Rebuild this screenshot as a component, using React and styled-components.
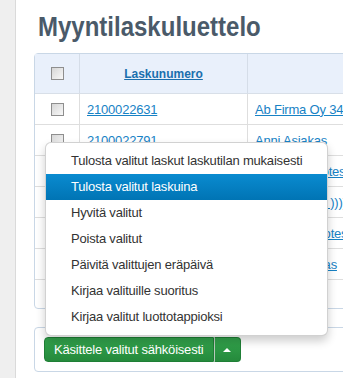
import styled, { createGlobalStyle } from "styled-components";

const GlobalStyle = createGlobalStyle`
html, body {
  margin: 0;
  padding: 0;
  overflow: hidden;
  background: #fff;
}
body {
  font-family: "Liberation Sans", Arial, sans-serif;
  font-size: 13px;
  color: #333;
}
`;

const rows = [
  { no: "2100022631", name: "Ab Firma Oy 34, Testikatu 1" },
  { no: "2100022791", name: "Anni Asiakas" },
  { no: "2100022792", name: "Nurmen Autotestaus Oy" },
  { no: "2100022793", name: "Erikoismerkit ))))((((" },
  { no: "2100022794", name: "Mäkisen Autotestaus" },
  { no: "2100022795", name: "Pekka Asiakas" },
  { no: "2100022796", name: "Anni" },
];

const menuItems = [
  "Tulosta valitut laskut laskutilan mukaisesti",
  "Tulosta valitut laskuina",
  "Hyvitä valitut",
  "Poista valitut",
  "Päivitä valittujen eräpäivä",
  "Kirjaa valituille suoritus",
  "Kirjaa valitut luottotappioksi",
];

const Page = styled.div`
display: flex;
width: 343px;
min-height: 378px;
`;

const Sidebar = styled.div`
flex: 0 0 15px;
background: #efefef;
border-right: 1px solid #dadada;
`;

const Main = styled.div`
flex: 1;
padding: 13px 0 0 18px;
overflow: hidden;
`;

const Title = styled.h1`
margin: 0 0 11px 4px;
height: 29px;
font-size: 24px;
line-height: 29px;
font-weight: bold;
color: #4a5a69;
white-space: nowrap;
transform: scaleY(1.12);
transform-origin: 0 80%;
`;

const Table = styled.table`
width: 520px;
border-collapse: separate;
border-spacing: 0;
border: 1px solid #c9d7e6;
border-radius: 4px;
letter-spacing: -0.2px;
`;

const HeadCell = styled.th`
height: 39px;
padding: 0;
background: #e9f0fb;
border-bottom: 1px solid #d8dfe8;
border-left: ${(p) => (p.$first ? "none" : "1px solid #d5dde8")};
width: ${(p) => p.$w || "auto"};
text-align: center;
font-size: 12px;
letter-spacing: 0;
`;

const Row = styled.tr`
&:last-child td {
  height: 28px;
  border-bottom: none;
}
`;

const Cell = styled.td`
height: 30px;
padding: 0 ${(p) => (p.$center ? "0" : "7px")};
border-bottom: 1px solid #dedede;
border-left: ${(p) => (p.$first ? "none" : "1px solid #dedede")};
text-align: ${(p) => (p.$center ? "center" : "left")};
white-space: nowrap;
`;

const Check = styled.input.attrs({ type: "checkbox" })`
appearance: none;
display: block;
margin: 0 auto;
width: 13px;
height: 13px;
border: 1px solid #8e8e8e;
background: linear-gradient(135deg, #d6d6d6, #f8f8f8);
box-sizing: border-box;
`;

const Link = styled.a`
color: ${(p) => (p.$head ? "#1a6fae" : "#1782c5")};
font-weight: ${(p) => (p.$head ? "bold" : "normal")};
text-decoration: underline;
`;

const Panel = styled.div`
margin-top: 18px;
width: 520px;
padding: 9px;
border: 1px solid #c9d7e6;
border-radius: 4px;
`;

const ButtonGroup = styled.div`
position: relative;
display: inline-flex;
`;

const GreenButton = styled.button`
height: 25px;
padding: 0 ${(p) => (p.$caret ? "0" : "9px")};
width: ${(p) => (p.$caret ? "27px" : "auto")};
display: flex;
align-items: center;
justify-content: center;
border: 1px solid #1f7f36;
border-left: ${(p) => (p.$caret ? "1px solid #b9c9bc" : "1px solid #1f7f36")};
border-radius: ${(p) => (p.$caret ? "0 4px 4px 0" : "4px 0 0 4px")};
background: linear-gradient(#33a44d, #258a3c);
color: #fff;
font-family: "Liberation Sans", Arial, sans-serif;
font-size: 13px;
letter-spacing: -0.2px;
`;

const Caret = styled.span`
width: 0;
height: 0;
border-left: 4px solid transparent;
border-right: 4px solid transparent;
border-bottom: 4px solid #fff;
`;

const Menu = styled.ul`
position: absolute;
left: 1px;
bottom: 100%;
margin: 0 0 1px;
padding: 5px 0;
width: 283px;
box-sizing: border-box;
list-style: none;
background: #fff;
border: 1px solid rgba(0, 0, 0, 0.18);
border-radius: 6px;
box-shadow: 0 5px 10px rgba(0, 0, 0, 0.2);
`;

const MenuItem = styled.li`
height: 26px;
line-height: 26px;
padding: 0 25px;
white-space: nowrap;
letter-spacing: -0.2px;
color: ${(p) => (p.$active ? "#fff" : "#333")};
background: ${(p) => (p.$active ? "linear-gradient(#0a8bd0, #0074b4)" : "transparent")};
`;

export default function App() {
  return (
    <Page>
      <GlobalStyle />
      <Sidebar />
      <Main>
        <Title>Myyntilaskuluettelo</Title>
        <Table>
          <thead>
            <tr>
              <HeadCell $first $w="44px">
                <Check />
              </HeadCell>
              <HeadCell $w="167px">
                <Link $head href="#">Laskunumero</Link>
              </HeadCell>
              <HeadCell />
            </tr>
          </thead>
          <tbody>
            {rows.map((r) => (
              <Row key={r.no}>
                <Cell $first $center>
                  <Check />
                </Cell>
                <Cell>
                  <Link href="#">{r.no}</Link>
                </Cell>
                <Cell>
                  <Link href="#">{r.name}</Link>
                </Cell>
              </Row>
            ))}
          </tbody>
        </Table>
        <Panel>
          <ButtonGroup>
            <Menu>
              {menuItems.map((m, i) => (
                <MenuItem key={m} $active={i === 1}>
                  {m}
                </MenuItem>
              ))}
            </Menu>
            <GreenButton>Käsittele valitut sähköisesti</GreenButton>
            <GreenButton $caret>
              <Caret />
            </GreenButton>
          </ButtonGroup>
        </Panel>
      </Main>
    </Page>
  );
}
